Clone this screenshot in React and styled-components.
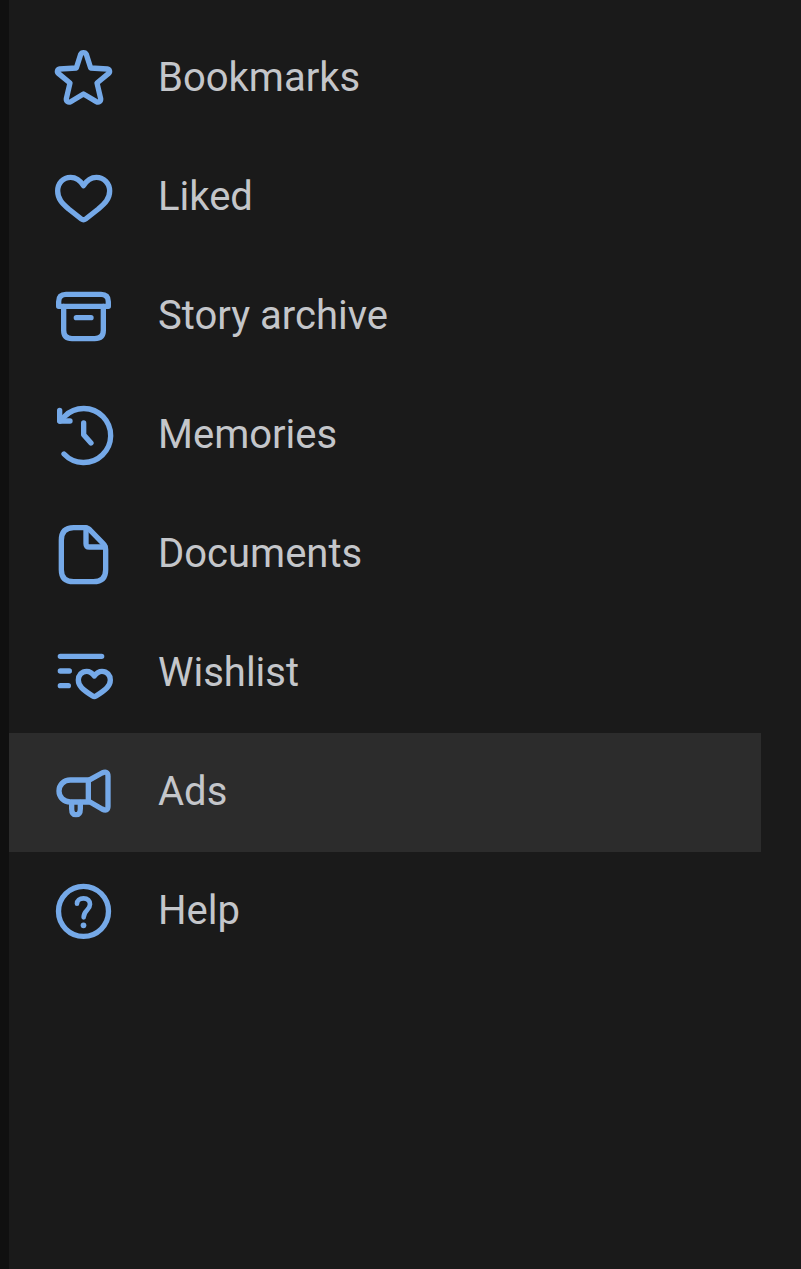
import React, { useState } from 'react';
import styled, { createGlobalStyle } from 'styled-components';

const GlobalStyle = createGlobalStyle`
  * {
    box-sizing: border-box;
  }

  body {
    margin: 0;
    background-color: #1a1a1a;
    font-family: Roboto, 'Liberation Sans', sans-serif;
  }
`;

const Sidebar = styled.nav`
  min-height: 100vh;
  padding: 19px 40px 0 0;
  border-left: 9px solid #101010;
  background-color: #1a1a1a;
`;

const MenuList = styled.ul`
  margin: 0;
  padding: 0;
  list-style: none;
`;

const MenuLink = styled.a`
  display: flex;
  align-items: flex-start;
  gap: 34px;
  padding: 19px 35px 20px;
  color: #c4c6ca;
  text-decoration: none;
  background-color: ${(props) => (props.$active ? '#2c2c2c' : 'transparent')};
`;

const MenuIcon = styled.svg`
  flex: none;
  width: 80px;
  height: 80px;
  fill: none;
  stroke: #75a9e8;
  stroke-width: 16;
  stroke-linecap: round;
  stroke-linejoin: round;
`;

const MenuLabel = styled.span`
  font-size: 40px;
  line-height: 80px;
`;

const items = [
  {
    id: 'bookmarks',
    label: 'Bookmarks',
    icon: (
      <path d="M110 49C113 42 124 42 127 49L140 90L190 93C197 94 199 102 194 106L159 135L170 182C171 190 164 195 157 191L118.500 168L80 191C73 195 66 190 67 182L78 135L43 106C38 102 40 94 47 93L97 90Z" />
    ),
  },
  {
    id: 'liked',
    label: 'Liked',
    icon: (
      <path d="M118.500 86C108 69 95 61 80 61C57 61 41 79 41 102C41 125 54 139 74 156L112 186Q118.500 191 125 186L163 156C183 139 197 125 197 102C197 79 180 61 157 61C142 61 129 69 118.500 86Z" />
    ),
  },
  {
    id: 'archive',
    label: 'Story archive',
    icon: (
      <>
        <path d="M44 91V77Q44 55 66 55H171Q193 55 193 77V91Z" />
        <path d="M59 91V163Q59 188 84 188H152Q178 188 178 163V91" />
        <path d="M97 125H141" />
      </>
    ),
  },
  {
    id: 'memories',
    label: 'Memories',
    icon: (
      <>
        <path d="M60 177A81 81 0 1 0 62 64L48 78" />
        <path d="M47 46V78H78" />
        <path d="M119 84V119L141 144" />
      </>
    ),
  },
  {
    id: 'documents',
    label: 'Documents',
    icon: (
      <>
        <path d="M124 41H89Q52 41 52 79V167Q52 203 89 203H148Q185 203 185 167V107Q185 96 177 88L139 49Q132 41 124 41Z" />
        <path d="M126 42V89Q126 99 136 99H183" />
      </>
    ),
  },
  {
    id: 'wishlist',
    label: 'Wishlist',
    icon: (
      <>
        <path d="M49 70H173M49 114H76M49 158H73" />
        <path d="M151 129C144 119 137 115 128 115C113 115 103 127 103 141C103 159 116 170 146 189Q151 192 156 189C186 170 199 159 199 141C199 127 189 115 174 115C165 115 158 119 151 129Z" />
      </>
    ),
  },
  {
    id: 'ads',
    label: 'Ads',
    icon: (
      <>
        <path d="M133 84H79C59 84 45 99 45 117C45 135 59 150 79 150H133Z" />
        <path d="M138 83L174 63Q192 55 192 73V163Q192 180 174 171L138 150" />
        <path d="M83 151V170Q83 188 96 188Q109 188 109 170V151" />
      </>
    ),
  },
  {
    id: 'help',
    label: 'Help',
    icon: (
      <>
        <circle cx="118.500" cy="121" r="75" />
        <path
          d="M99 98C99 88 107 82 118.500 82C131 82 138 89 138 100C138 118 119 117 119 139"
          strokeWidth="14"
        />
        <path d="M118.500 163V163.100" strokeWidth="17" />
      </>
    ),
  },
];

const App = () => {
  const [selected, setSelected] = useState('ads');

  return (
    <>
      <GlobalStyle />
      <Sidebar>
        <MenuList>
          {items.map((item) => (
            <li key={item.id}>
              <MenuLink
                href={`#${item.id}`}
                $active={item.id === selected}
                onClick={() => setSelected(item.id)}
              >
                <MenuIcon viewBox="0 0 240 240" aria-hidden="true">
                  {item.icon}
                </MenuIcon>
                <MenuLabel>{item.label}</MenuLabel>
              </MenuLink>
            </li>
          ))}
        </MenuList>
      </Sidebar>
    </>
  );
};

export default App;
